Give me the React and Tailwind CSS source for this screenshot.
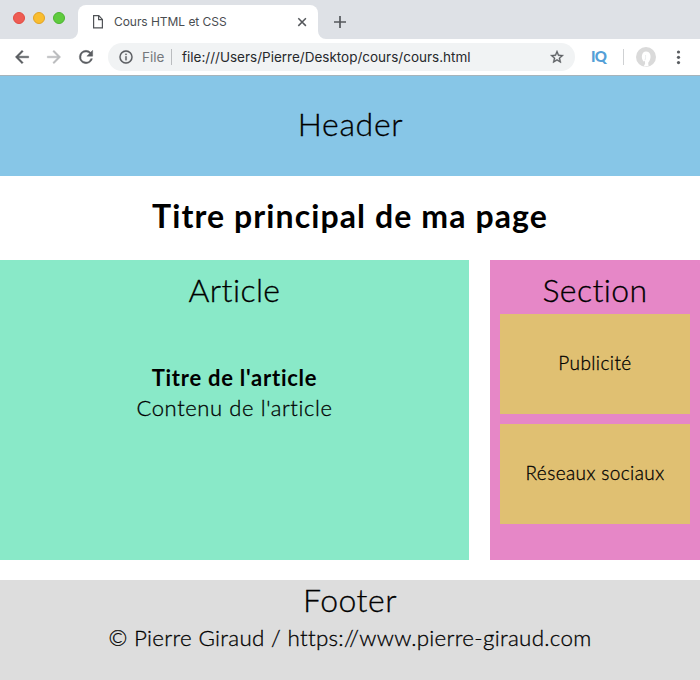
const AVENIR = "font-['Lato','Open_Sans',sans-serif] [font-variant-ligatures:none]";
const LIGHT = "font-light [-webkit-text-stroke:0.3px_black]";

function Dot({ className }) {
  return <span className={`block size-3 rounded-full border ${className}`} />;
}

function TabStrip() {
  return (
    <div className="flex h-[39px] items-end bg-[#dee1e6]">
      <div className="mb-[15px] ml-[13px] flex gap-2">
        <Dot className="border-[#e24b41] bg-[#ee5c54]" />
        <Dot className="border-[#e1a325] bg-[#f9bd2f]" />
        <Dot className="border-[#4bb430] bg-[#5fcb3e]" />
      </div>
      <svg className="ml-[5px] block size-2" viewBox="0 0 8 8">
        <path d="M8 0v8H0a8 8 0 0 0 8-8z" fill="#fff" />
      </svg>
      <div className="flex h-[34px] w-[240px] items-center rounded-t-lg bg-white pl-[14px] pr-[10px]">
        <svg className="block h-4 w-3 shrink-0" viewBox="0 0 12 16" fill="none" stroke="#505357" strokeWidth="1.2">
          <path d="M1.6 1.6h5.2l3.6 3.8v8.4H1.6zM6.6 1.6v4h3.8" />
        </svg>
        <span className="ml-[10px] whitespace-nowrap font-['Inter',sans-serif] text-xs leading-4 tracking-[-0.05px] text-[#4a4d51]">Cours HTML et CSS</span>
        <svg className="ml-auto block size-3" viewBox="0 0 12 12" fill="none" stroke="#55585c" strokeWidth="1.5">
          <path d="M2.3 2.3l7.6 7.6M9.9 2.3l-7.6 7.6" />
        </svg>
      </div>
      <svg className="block size-2" viewBox="0 0 8 8">
        <path d="M0 0v8h8a8 8 0 0 1-8-8z" fill="#fff" />
      </svg>
      <svg className="mb-[11px] ml-[8px] block size-3" viewBox="0 0 12 12" fill="none" stroke="#55585c" strokeWidth="1.7">
        <path d="M6 0v12M0 6h12" />
      </svg>
    </div>
  );
}

function Toolbar() {
  return (
    <div className="flex h-9 items-center bg-white text-left font-['Inter',sans-serif] text-[13.5px]">
      <svg className="ml-3 block size-5" viewBox="0 0 24 24" fill="#5a5d61" stroke="#5a5d61" strokeWidth="0.5">
        <path d="M20 11H7.83l5.59-5.59L12 4l-8 8 8 8 1.41-1.41L7.83 13H20v-2z" />
      </svg>
      <svg className="ml-3 block size-5" viewBox="0 0 24 24" fill="#babcbe" stroke="#babcbe" strokeWidth="0.5">
        <path d="M12 4l-1.41 1.41L16.17 11H4v2h12.17l-5.58 5.59L12 20l8-8z" />
      </svg>
      <svg className="ml-3 block size-5" viewBox="0 0 24 24" fill="#5a5d61" stroke="#5a5d61" strokeWidth="0.5">
        <path d="M17.65 6.35A7.958 7.958 0 0 0 12 4a8 8 0 1 0 7.73 10h-2.08A6 6 0 1 1 12 6c1.66 0 3.14.69 4.22 1.78L13 11h7V4l-2.35 2.35z" />
      </svg>
      <div className="ml-3 flex h-7 w-[467px] items-center rounded-full bg-[#f1f3f4] pl-[10px] pr-[10px]">
        <svg className="block size-4 shrink-0" viewBox="0 0 24 24" fill="#5a5d61" stroke="#5a5d61" strokeWidth="0.3">
          <path d="M11 17h2v-6h-2v6zm1-15a10 10 0 1 0 0 20 10 10 0 0 0 0-20zm0 18a8 8 0 1 1 0-16 8 8 0 0 1 0 16zM11 9h2V7h-2v2z" />
        </svg>
        <span className="ml-2 w-[29px] leading-5 text-[#75787c]">File</span>
        <span className="h-4 w-px bg-[#babcbf]" />
        <span className="ml-[10px] whitespace-nowrap leading-5 text-[#27292c]">file:///Users/Pierre/Desktop/cours/cours.html</span>
        <svg className="ml-auto block size-4 shrink-0" viewBox="0 0 24 24" fill="#5a5d61" stroke="#5a5d61" strokeWidth="0.5">
          <path d="M22 9.24l-7.19-.62L12 2 9.19 8.63 2 9.24l5.46 4.73L5.82 21 12 17.27 18.18 21l-1.63-7.03L22 9.24zM12 15.4l-3.76 2.27 1-4.28-3.32-2.88 4.38-.38L12 6.1l1.71 4.04 4.38.38-3.32 2.88 1 4.28L12 15.4z" />
        </svg>
      </div>
      <span className="-mt-[3px] ml-4 w-4 font-['Lato',sans-serif] text-[15px] font-black leading-5 tracking-[-0.7px] text-[#549fd7]">IQ</span>
      <span className="ml-4 h-4 w-px bg-[#cfd1d3]" />
      <svg className="ml-3 block size-5" viewBox="0 0 20 20">
        <circle cx="10" cy="10" r="10" fill="#dadada" />
        <path d="M7.6 14.4C4.6 11 5.6 4.5 10 4.5s5.8 5 3.5 9.3l-1.3 1.9.3 3.2c-1.4.5-3.2.7-4.7.3l1.3-2.5-.2-2.6z" fill="#fff" />
        <path d="M9.6 8c-.2 2 .3 3.4-.7 5.2" stroke="#e4e7e8" strokeWidth="0.8" fill="none" />
      </svg>
      <svg className="ml-4 block h-4 w-3" viewBox="0 0 12 16" fill="#5a5d61">
        <circle cx="6.5" cy="3" r="1.6" />
        <circle cx="6.5" cy="8.3" r="1.6" />
        <circle cx="6.5" cy="13.6" r="1.6" />
      </svg>
    </div>
  );
}

export default function App() {
  return (
    <div className={`flex h-[680px] w-[700px] flex-col overflow-hidden bg-white text-center text-black ${AVENIR}`}>
      <TabStrip />
      <Toolbar />
      <header className={`h-[101px] border-t border-[#a6b4bb] bg-[#87c6e7] pl-px text-[32px] leading-[96px] tracking-[0.7px] ${LIGHT}`}>Header</header>
      <h1 className="h-[84px] text-[32px] font-bold leading-[80px] tracking-[1.1px]">Titre principal de ma page</h1>
      <main className="flex h-[300px] justify-between">
        <article className="w-[469px] bg-[#89e9c8] pt-[10px]">
          <h2 className={`text-[32px] leading-10 tracking-[0.4px] ${LIGHT}`}>Article</h2>
          <h3 className="mt-[53px] text-[22px] font-bold leading-[30px] tracking-[0.75px]">Titre de l'article</h3>
          <p className={`text-[22px] leading-[30px] tracking-[0.6px] ${LIGHT}`}>Contenu de l'article</p>
        </article>
        <section className="w-[210px] bg-[#e687c7] px-[10px] pt-[10px]">
          <h2 className={`text-[32px] leading-10 tracking-[0.4px] ${LIGHT}`}>Section</h2>
          <div className={`mt-1 h-[100px] bg-[#e0c072] text-[19px] leading-[98px] tracking-[0.4px] ${LIGHT}`}>Publicité</div>
          <div className={`mt-[10px] h-[100px] bg-[#e0c072] text-[19px] leading-[98px] tracking-[0.4px] ${LIGHT}`}>Réseaux sociaux</div>
        </section>
      </main>
      <footer className="mt-5 h-[100px] bg-[#dddddd]">
        <p className={`text-[32px] leading-10 tracking-[0.5px] ${LIGHT}`}>Footer</p>
        <p className={`mt-[3px] text-[22.4px] leading-[30px] tracking-[0.3px] ${LIGHT}`}>© Pierre Giraud / https://www.pierre-giraud.com</p>
      </footer>
    </div>
  );
}
